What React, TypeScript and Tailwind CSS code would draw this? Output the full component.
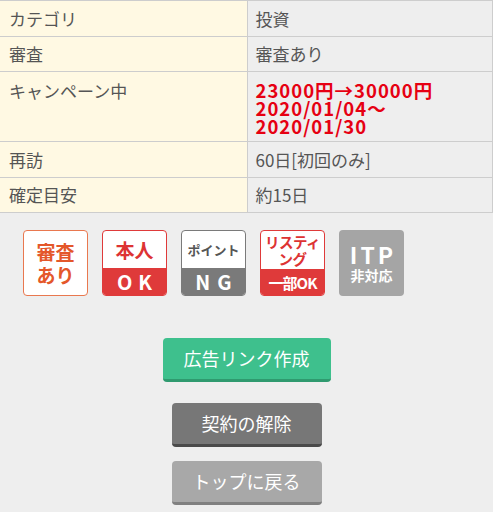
const font = { fontFamily: '"Noto Sans CJK JP", "Noto Sans", sans-serif' };

const rows: { label: string; value: React.ReactNode; tall?: boolean }[] = [
  { label: "カテゴリ", value: "投資" },
  { label: "審査", value: "審査あり" },
  {
    label: "キャンペーン中",
    tall: true,
    value: (
      <div className="font-bold text-[18.5px] leading-[18px] tracking-[1px] text-[#e60012] pt-[3px]">
        <div>23000円→30000円</div>
        <div>2020/01/04〜</div>
        <div>2020/01/30</div>
      </div>
    ),
  },
  { label: "再訪", value: "60日[初回のみ]" },
  { label: "確定目安", value: "約15日" },
];

function SplitBadge({ color, top, bottom }: { color: string; top: React.ReactNode; bottom: React.ReactNode }) {
  return (
    <div className={`w-[65px] h-[66px] rounded-[4px] border-[1.5px] bg-white overflow-hidden flex flex-col ${color}`}>
      <div className="flex-1 flex items-center justify-center">{top}</div>
      {bottom}
    </div>
  );
}

export default function App() {
  return (
    <div className="w-[493px] h-[512px] bg-[#eeeeee] text-[#555555]" style={font}>
      <table className="w-[493px] border-collapse text-[17px]">
        <tbody>
          {rows.map((r) => (
            <tr key={r.label} className={r.tall ? "h-[70px]" : "h-[35.5px]"}>
              <td
                className={`w-[247px] bg-[#fff9e3] border border-l-0 border-[#cdcdcd] pl-[9px] ${
                  r.tall ? "align-top pt-[6px]" : "align-middle"
                }`}
              >
                {r.label}
              </td>
              <td
                className={`bg-[#eeeeee] border border-[#cdcdcd] pl-[8px] ${r.tall ? "align-top pt-[6px]" : "align-middle"}`}
              >
                {r.value}
              </td>
            </tr>
          ))}
        </tbody>
      </table>

      <div className="flex gap-[14px] pl-[23px] mt-[17px]">
        <div className="w-[65px] h-[66px] rounded-[4px] border-[1.5px] border-[#e9784f] bg-white flex flex-col items-center justify-center font-bold text-[#e4572a] text-[19px] leading-[23px]">
          <span>審査</span>
          <span>あり</span>
        </div>

        <SplitBadge
          color="border-[#df3a3a]"
          top={<span className="font-bold text-[#dd3333] text-[19px] leading-none">本人</span>}
          bottom={
            <div className="h-[27px] bg-[#df3a3a] text-white font-bold text-[20px] tracking-[6px] pl-[6px] flex items-center justify-center leading-none">
              OK
            </div>
          }
        />

        <SplitBadge
          color="border-[#7a7a7a]"
          top={<span className="font-bold text-[#555555] text-[13px] leading-none">ポイント</span>}
          bottom={
            <div className="h-[27px] bg-[#7a7a7a] text-white font-bold text-[20px] tracking-[7px] pl-[7px] flex items-center justify-center leading-none">
              NG
            </div>
          }
        />

        <SplitBadge
          color="border-[#df3a3a]"
          top={
            <div className="font-bold text-[#dd3333] text-[14.5px] leading-[17px] text-center tracking-[-0.5px]">
              リスティ
              <br />
              ング
            </div>
          }
          bottom={
            <div className="h-[26px] bg-[#df3a3a] text-white font-bold text-[15px] tracking-[-1px] flex items-center justify-center leading-none">
              一部OK
            </div>
          }
        />

        <div className="w-[65px] h-[66px] rounded-[4px] bg-[#a5a5a5] flex flex-col items-center justify-center text-white font-bold">
          <span className="text-[23px] leading-[24px] tracking-[3px] pl-[3px]">ITP</span>
          <span className="text-[14px] leading-[18px]">非対応</span>
        </div>
      </div>

      <div className="flex flex-col items-center mt-[42px]">
        <button className="w-[168px] h-[44px] rounded-[4px] bg-[#3ec08d] border-b-[3px] border-[#2f9a6f] text-white text-[18px] flex items-center justify-center">
          広告リンク作成
        </button>
        <button className="w-[150px] h-[44px] rounded-[4px] bg-[#777777] border-b-[3px] border-[#4a4a4a] text-white text-[18px] flex items-center justify-center mt-[21px]">
          契約の解除
        </button>
        <button className="w-[150px] h-[44px] rounded-[4px] bg-[#a8a8a8] border-b-[3px] border-[#808080] text-white text-[18px] flex items-center justify-center mt-[14px]">
          トップに戻る
        </button>
      </div>
    </div>
  );
}
